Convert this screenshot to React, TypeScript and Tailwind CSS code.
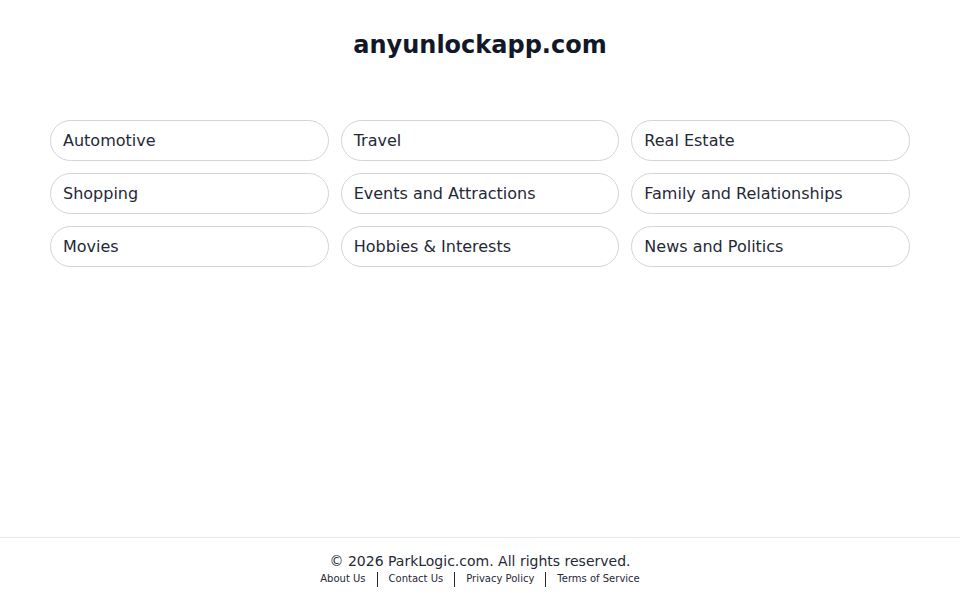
import React from "react";

const items = [
  "Automotive",
  "Travel",
  "Real Estate",
  "Shopping",
  "Events and Attractions",
  "Family and Relationships",
  "Movies",
  "Hobbies & Interests",
  "News and Politics",
];

const links = ["About Us", "Contact Us", "Privacy Policy", "Terms of Service"];

export default function App() {
  return (
    <div
      className="min-h-[600px] flex flex-col bg-white text-[#111827]"
      style={{ fontFamily: '"DejaVu Sans", sans-serif' }}
    >
      <main className="flex-1 px-[50px]">
        <h1 className="mt-[29px] text-center text-[24px] leading-8 font-bold text-[#111827]">
          anyunlockapp.com
        </h1>
        <div className="mt-[59px] grid grid-cols-3 gap-x-3 gap-y-3">
          {items.map((t) => (
            <div
              key={t}
              className="h-[41px] flex items-center px-3 rounded-full border border-[#d4d4d8] text-[16px] text-[#1f2937]"
            >
              {t}
            </div>
          ))}
        </div>
      </main>
      <footer className="border-t border-[#e5e7eb] pt-[13px] pb-[13px] flex flex-col items-center">
        <div className="text-[14px] leading-5 text-[#1f2937]">
          © 2026 ParkLogic.com. All rights reserved.
        </div>
        <div className="flex items-center text-[10px] leading-4 text-[#1f2937]">
          {links.map((l, i) => (
            <React.Fragment key={l}>
              {i > 0 && <span className="mx-[11px] w-px h-[15px] bg-[#1f2937]" />}
              <a className="cursor-pointer">{l}</a>
            </React.Fragment>
          ))}
        </div>
      </footer>
    </div>
  );
}
